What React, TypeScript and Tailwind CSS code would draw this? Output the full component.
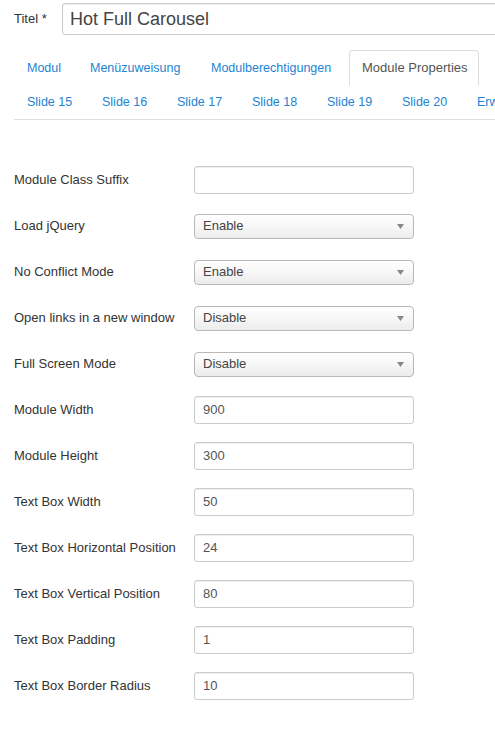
const topTabs = [
  { label: 'Modul', w: 'w-[61px]' },
  { label: 'Menüzuweisung', w: 'w-[119px]' },
  { label: 'Modulberechtigungen', w: 'w-[148px]' },
];

const slideTabs = ['Slide 15', 'Slide 16', 'Slide 17', 'Slide 18', 'Slide 19', 'Slide 20', 'Erweitert'];

type Field = { label: string; kind: 'text' | 'select'; value: string };

const fields: Field[] = [
  { label: 'Module Class Suffix', kind: 'text', value: '' },
  { label: 'Load jQuery', kind: 'select', value: 'Enable' },
  { label: 'No Conflict Mode', kind: 'select', value: 'Enable' },
  { label: 'Open links in a new window', kind: 'select', value: 'Disable' },
  { label: 'Full Screen Mode', kind: 'select', value: 'Disable' },
  { label: 'Module Width', kind: 'text', value: '900' },
  { label: 'Module Height', kind: 'text', value: '300' },
  { label: 'Text Box Width', kind: 'text', value: '50' },
  { label: 'Text Box Horizontal Position', kind: 'text', value: '24' },
  { label: 'Text Box Vertical Position', kind: 'text', value: '80' },
  { label: 'Text Box Padding', kind: 'text', value: '1' },
  { label: 'Text Box Border Radius', kind: 'text', value: '10' },
];

function TextField({ value }: { value: string }) {
  return (
    <div className="w-[220px] h-[28px] border border-[#cccccc] rounded-[3px] bg-white shadow-[inset_0_1px_1px_rgba(0,0,0,0.075)] flex items-center px-[8px] text-[13px] text-[#555]">
      {value}
    </div>
  );
}

function SelectField({ value }: { value: string }) {
  return (
    <div className="w-[220px] h-[25px] border border-[#b8b8b8] rounded-[4px] bg-gradient-to-b from-white via-[#f7f7f7] to-[#ececec] flex items-center justify-between pl-[8px] pr-[9px] text-[13px] text-[#444]">
      <span>{value}</span>
      <svg width="7" height="5" viewBox="0 0 7 5">
        <path d="M0 0h7L3.5 5z" fill="#888" />
      </svg>
    </div>
  );
}

function App() {
  return (
    <div className="w-[495px] h-[734px] overflow-hidden bg-white font-['Liberation_Sans',Arial,sans-serif]">
      {/* Title */}
      <div className="flex items-center pl-[14px] pt-[3px]">
        <span className="shrink-0 w-[48px] whitespace-nowrap text-[13px] text-[#333]">Titel *</span>
        <div className="shrink-0 w-[460px] h-[32px] border border-[#cccccc] rounded-[3px] flex items-center px-[7px] text-[18px] text-[#444] shadow-[inset_0_1px_1px_rgba(0,0,0,0.075)]">
          Hot Full Carousel
        </div>
      </div>

      {/* Tabs */}
      <div className="mt-[15px] ml-[14px] text-[12.5px] whitespace-nowrap">
        <div className="flex h-[35px] gap-[2px] pl-px">
          {topTabs.map((t) => (
            <a key={t.label} className={`${t.w} shrink-0 h-[36px] pl-[12px] pt-[9px] leading-[18px] text-[#2384d3]`}>
              {t.label}
            </a>
          ))}
          <a className="relative z-10 shrink-0 w-[130px] h-[36px] pl-[12px] pt-[8px] leading-[18px] border border-[#dddddd] border-b-white rounded-t-[4px] bg-white text-[#555] text-[13px]">
            Module Properties
          </a>
        </div>
        <div className="flex h-[35px] border-b border-[#dddddd]">
          {slideTabs.map((t) => (
            <a key={t} className="shrink-0 w-[75px] pl-[13px] pt-[8px] leading-[18px] text-[#2384d3]">
              {t}
            </a>
          ))}
        </div>
      </div>

      {/* Form */}
      <div className="mt-[46px] pl-[14px] flex flex-col gap-[18px]">
        {fields.map((f) => (
          <div key={f.label} className="flex items-center h-[28px]">
            <label className="w-[180px] text-[13px] text-[#333]">{f.label}</label>
            {f.kind === 'text' ? <TextField value={f.value} /> : <SelectField value={f.value} />}
          </div>
        ))}
      </div>
    </div>
  );
}

export default App;
